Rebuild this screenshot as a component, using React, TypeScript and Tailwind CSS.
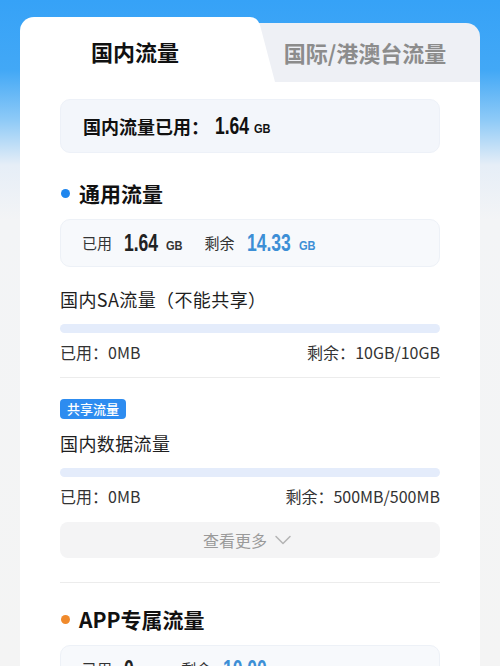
import { ChevronDown } from "lucide-react"

const cjk = "font-['Noto_Sans_CJK_SC','Noto_Sans',sans-serif]"

// condensed digits: Liberation Sans squeezed, outer box holds the final width
function Num({ v, w, color = "text-[#222]" }: { v: string; w: string; color?: string }) {
  return (
    <span className={`inline-block overflow-visible whitespace-nowrap ${w}`}>
      <span className={`inline-block origin-left scale-x-[0.73] font-['Liberation_Sans',sans-serif] text-[24px] font-bold leading-[28px] ${color}`}>
        {v}
      </span>
    </span>
  )
}

function Unit({ v, color = "text-[#333]" }: { v: string; color?: string }) {
  return (
    <span className={`mt-[5px] inline-block origin-left scale-x-[0.85] font-['Liberation_Sans',sans-serif] text-[13px] font-bold ${color}`}>
      {v}
    </span>
  )
}

function Usage({ used, usedW, usedUnit, left, leftW, leftUnit }: { used: string; usedW: string; usedUnit: string; left: string; leftW: string; leftUnit: string }) {
  return (
    <div className="mx-10 flex h-[48px] items-center rounded-[10px] border border-[#edf1f7] bg-[#f7f9fc] px-[21px]">
      <span className="text-[15px] text-[#333]">已用</span>
      <span className="ml-[12px] flex items-center">
        <Num v={used} w={usedW} />
      </span>
      <span className="ml-[8px] flex">
        <Unit v={usedUnit} />
      </span>
      <span className="ml-[19px] text-[15px] text-[#333]">剩余</span>
      <span className="ml-[12px] flex items-center">
        <Num v={left} w={leftW} color="text-[#3d8fd6]" />
      </span>
      <span className="ml-[8px] flex">
        <Unit v={leftUnit} color="text-[#3d8fd6]" />
      </span>
    </div>
  )
}

function Bucket({ title, used, left }: { title: string; used: string; left: string }) {
  return (
    <div className="mx-10">
      <div className="text-[18px] leading-[24px] tracking-[0.4px] text-[#1f1f1f]">{title}</div>
      <div className="mt-[13px] h-[9px] rounded-full bg-[#e4ecfb]" />
      <div className="mt-[9px] flex justify-between text-[16px] leading-[20px] text-[#333]">
        <span>已用：{used}</span>
        <span>剩余：{left}</span>
      </div>
    </div>
  )
}

function Heading({ dot, text }: { dot: string; text: string }) {
  return (
    <div className="mx-10 flex items-center gap-[9px] pl-[1px]">
      <span className={`h-[9px] w-[9px] rounded-full ${dot}`} />
      <span className="text-[21px] font-bold leading-[28px] text-[#111]">{text}</span>
    </div>
  )
}

export default function App() {
  return (
    <div className={`${cjk} h-[666px] overflow-hidden bg-[linear-gradient(180deg,#36a2f7_0px,#42a8f6_70px,#8ecaf7_120px,#e6eef7_165px,#f3f4f6_220px,#f4f4f4_100%)] pt-[17px]`}>
      <div className="mx-5">
        {/* tabs */}
        <div className="flex h-[65px]">
          <div className="flex w-[218px] items-center justify-center rounded-tl-[14px] bg-white pl-[12px] pt-[3px]">
            <span className="text-[22px] font-bold text-[#111]">国内流量</span>
          </div>
          <svg width="40" height="65" viewBox="0 0 40 65" className="shrink-0">
            <path d="M0 6 H40 V65 H0 Z" fill="#eef0f5" />
            <path d="M0 0 H12 Q20 0 22.5 10 L37 65 H0 Z" fill="#ffffff" />
          </svg>
          <div className="mt-[6px] flex flex-1 items-center justify-center rounded-tr-[14px] bg-[#eef0f5] pr-[28px]">
            <span className="text-[22px] font-bold text-[#8c8c8c]">国际/港澳台流量</span>
          </div>
        </div>

        {/* body */}
        <div className="bg-white pb-10 pt-[17px]">
          <div className="mx-10 flex h-[54px] items-center rounded-[10px] border border-[#edf1f8] bg-[#f3f6fb] px-[22px]">
            <span className="text-[18px] font-bold text-[#111]">国内流量已用：</span>
            <span className="ml-[6px] flex items-center">
              <Num v="1.64" w="w-[34px]" color="text-[#111]" />
            </span>
            <span className="ml-[5px] flex">
              <Unit v="GB" color="text-[#111]" />
            </span>
          </div>

          <div className="mt-[26px]">
            <Heading dot="bg-[#1f86ee]" text="通用流量" />
          </div>
          <div className="mt-[12px]">
            <Usage used="1.64" usedW="w-[34px]" usedUnit="GB" left="14.33" leftW="w-[44px]" leftUnit="GB" />
          </div>

          <div className="mt-[20px]">
            <Bucket title="国内SA流量（不能共享）" used="0MB" left="10GB/10GB" />
          </div>

          <div className="mx-10 mt-[15px] h-px bg-[#ececec]" />

          <div className="mx-10 mt-[21px] flex">
            <span className="rounded-[4px] bg-[#2d8cf0] px-[7px] text-[13px] leading-[20px] font-medium text-white">共享流量</span>
          </div>
          <div className="mt-[12px]">
            <Bucket title="国内数据流量" used="0MB" left="500MB/500MB" />
          </div>

          <button className="mx-10 mt-[16px] flex h-[36px] w-[380px] items-center justify-center gap-[2px] rounded-[8px] bg-[#f4f4f5] text-[16px] text-[#9a9a9a]">
            查看更多
            <ChevronDown size={28} strokeWidth={1.3} className="text-[#b5b5b5]" />
          </button>

          <div className="mx-10 mt-[24px] h-px bg-[#ececec]" />

          <div className="mt-[22px]">
            <Heading dot="bg-[#f08a2c]" text="APP专属流量" />
          </div>
          <div className="mt-[12px]">
            <Usage used="0" usedW="w-[10px]" usedUnit="MB" left="10.00" leftW="w-[44px]" leftUnit="GB" />
          </div>
        </div>
      </div>
    </div>
  )
}
